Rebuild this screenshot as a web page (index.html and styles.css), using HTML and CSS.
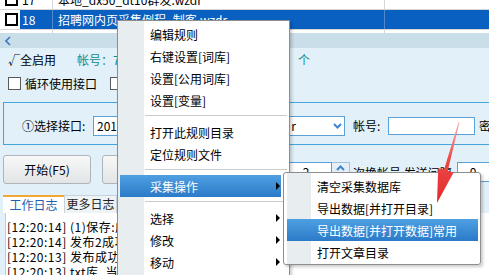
FILE: index.html
```html
<!DOCTYPE html>
<html lang="zh-CN">
  <head>
    <meta charset="UTF-8" />
    <title>采集发布</title>
    <link rel="stylesheet" href="styles.css">
  </head>
  <body>
    <div class="rules">
      <div class="rule">
        <div class="cell cell-check"><span class="box"></span></div>
        <div class="cell cell-num">17</div>
        <div class="cell cell-name">本地_dx50_dt10群发.wzdr</div>
        <div class="cell cell-rest"></div>
      </div>
      <div class="rule rule-selected">
        <div class="cell cell-check"><span class="box"></span></div>
        <div class="cell cell-num">18</div>
        <div class="cell cell-name">招聘网内页采集例程_制客.wzdr</div>
        <div class="cell cell-rest"></div>
      </div>
      <div class="rule">
        <div class="cell cell-check"><span class="box"></span></div>
        <div class="cell cell-num">19</div>
        <div class="cell cell-name">文章_批量采集发布.wzdr</div>
        <div class="cell cell-rest"></div>
      </div>
    </div>
    <div class="hscroll">
      <svg width="6" height="10" viewBox="0 0 6 10"><polyline points="5,1 1,5 5,9" fill="none" stroke="#3b78c4" stroke-width="1.6"/></svg>
    </div>

    <div class="panel">
      <div class="status">
        <span class="all-on">√全启用</span>
        <span class="account account-main">帐号：7 已登录 0 共 1</span>
        <span class="account">个</span>
      </div>
      <div class="options">
        <label class="check"><span class="box"></span>循环使用接口</label>
        <label class="check"><span class="box"></span>随机使用帐号</label>
      </div>
      <div class="group">
        <span class="group-label">①选择接口:</span>
        <div class="combo">
          <span class="combo-text">2016</span>
          <span>r</span>
          <span class="combo-btn">
            <svg width="9" height="6" viewBox="0 0 9 6"><polyline points="1,1 4.5,4.5 8,1" fill="none" stroke="#3b86d6" stroke-width="2"/></svg>
          </span>
        </div>
        <span class="field-label">帐号:</span>
        <div class="field"></div>
        <span class="field-tail">密</span>
      </div>
      <div class="actions">
        <button class="btn">开始(F5)</button>
        <button class="btn btn-wide">停止</button>
        <div class="interval">
          <div class="num">2</div>
          <span class="spin">
            <svg width="9" height="6" viewBox="0 0 9 6"><polyline points="1,5 4.5,1.5 8,5" fill="none" stroke="#3b86d6" stroke-width="2"/></svg>
          </span>
          <span class="interval-text">次换帐号 发送间隔</span>
          <div class="num num-wide">0</div>
        </div>
      </div>
      <div class="tabs">
        <div class="tab tab-active">工作日志</div>
        <div class="tab">更多日志</div>
      </div>
      <div class="log">
        <div>[12:20:14] (1)保存:成功</div>
        <div>[12:20:14] 发布2成功</div>
        <div>[12:20:13] 发布成功</div>
        <div>[12:20:13] txt库_当前</div>
      </div>
    </div>

    <div class="menu">
      <div class="menu-item">编辑规则</div>
      <div class="menu-item">右键设置[词库]</div>
      <div class="menu-item">设置[公用词库]</div>
      <div class="menu-item">设置[变量]</div>
      <div class="menu-sep"></div>
      <div class="menu-item">打开此规则目录</div>
      <div class="menu-item">定位规则文件</div>
      <div class="menu-sep"></div>
      <div class="menu-item active">采集操作<span class="sub-arrow"></span></div>
      <div class="menu-sep"></div>
      <div class="menu-item">选择<span class="sub-arrow"></span></div>
      <div class="menu-item">修改<span class="sub-arrow"></span></div>
      <div class="menu-item">移动<span class="sub-arrow"></span></div>
    </div>

    <div class="submenu">
      <div class="submenu-item">清空采集数据库</div>
      <div class="submenu-item">导出数据[并打开目录]</div>
      <div class="submenu-item active">导出数据[并打开数据]常用</div>
      <div class="submenu-item">打开文章目录</div>
    </div>

    <svg class="pointer" width="489" height="275" viewBox="0 0 489 275">
      <defs>
        <linearGradient id="red" x1="0" y1="0" x2="0" y2="1">
          <stop offset="0" stop-color="#f6b3b3"/>
          <stop offset="0.45" stop-color="#ec4a4a"/>
          <stop offset="1" stop-color="#e42828"/>
        </linearGradient>
      </defs>
      <polygon points="458.6,122 459.6,122 447.8,170.8 453.6,172.4 437,203 438.2,168.2 444,169.8" fill="url(#red)"/>
    </svg>
  </body>
</html>
```

FILE: styles.css
```css
* {
  margin: 0;
  padding: 0;
  box-sizing: border-box;
}

body {
  width: 489px;
  height: 275px;
  overflow: hidden;
  position: relative;
  background: #e2f1f9;
  font-family: "Noto Sans CJK SC", "Noto Sans", sans-serif;
  font-size: 12px;
  color: #000;
}

/* rule list */
.rules {
  height: 33px;
  overflow: hidden;
  background: #fff;
}

.rule {
  display: flex;
  height: 20px;
  border-bottom: 1px solid #d6d6d6;
}

.rule:first-child {
  margin-top: -10px;
}

.cell {
  display: flex;
  align-items: center;
  flex-shrink: 0;
  height: 100%;
  white-space: nowrap;
}

.cell-check {
  width: 20px;
  padding-left: 5px;
  background: #fff;
}

.cell-num {
  width: 33px;
  padding-left: 2px;
  border-right: 1px solid #d6d6d6;
}

.cell-name {
  width: 332px;
  padding-left: 5px;
  border-right: 1px solid #d6d6d6;
}

.cell-rest {
  flex: 1;
}

.rule-selected {
  background: #0a60c0;
  color: #fff;
}

.rule-selected .cell-num,
.rule-selected .cell-name {
  border-right-color: #4f88cc;
}

.rule .box {
  width: 13px;
  height: 13px;
  border: 2px solid #000;
  background: #fff;
}

.hscroll {
  height: 15px;
  background: #c9dee9;
  padding: 3px 0 0 5px;
}

.hscroll svg {
  display: block;
}

/* main panel */
.panel {
  padding-left: 3px;
}

.status {
  display: flex;
  align-items: center;
  height: 22px;
  padding-left: 5px;
  white-space: nowrap;
}

.status > *,
.group > *,
.actions > *,
.interval > * {
  flex-shrink: 0;
}

.all-on {
  width: 69px;
}

.account {
  color: #14898a;
}

.account-main {
  width: 221px;
  overflow: hidden;
}

.options {
  display: flex;
  align-items: center;
  height: 26px;
  padding-left: 5px;
}

.check {
  display: flex;
  align-items: center;
  gap: 4px;
  width: 102px;
  white-space: nowrap;
}

.check .box {
  width: 13px;
  height: 13px;
  border: 1px solid #5a5a5a;
  background: #fff;
}

.group {
  display: flex;
  align-items: center;
  height: 43px;
  margin-top: 6px;
  margin-right: -20px;
  padding: 4px 0 0 18px;
  border: 1px solid #45a5dc;
  white-space: nowrap;
}

.group-label {
  width: 71px;
}

.combo {
  display: flex;
  align-items: center;
  width: 252px;
  height: 20px;
  padding-left: 3px;
  border: 1px solid #5ba0d6;
  background: #fff;
}

.combo-text {
  flex: 1;
}

.combo-btn {
  display: flex;
  justify-content: flex-end;
  width: 48px;
  padding-right: 2px;
}

.field-label {
  width: 35px;
  margin-left: 8px;
}

.field {
  width: 87px;
  height: 18px;
  border: 1px solid #5ba0d6;
  background: #fff;
}

.field-tail {
  margin-left: 4px;
}

.actions {
  display: flex;
  align-items: flex-start;
  height: 29px;
  margin-top: 10px;
}

.btn {
  width: 88px;
  height: 29px;
  border: 1px solid #adb5ba;
  border-radius: 3px;
  background: linear-gradient(#f8f8f8, #e2e4e5);
  font-family: inherit;
  font-size: 12px;
  color: #000;
}

.btn-wide {
  width: 110px;
  margin-left: 11px;
}

.interval {
  display: flex;
  align-items: center;
  margin-left: 68px;
  margin-top: 7px;
  white-space: nowrap;
}

.num {
  width: 52px;
  height: 20px;
  line-height: 18px;
  text-align: center;
  border: 1px solid #5ba0d6;
  background: #fff;
}

.spin {
  display: flex;
  justify-content: center;
  width: 18px;
  height: 20px;
  padding-top: 2px;
  border: 1px solid #9fc3de;
  border-left: none;
  background: #e6eff5;
}

.interval-text {
  margin-left: 3px;
}

.num-wide {
  width: 70px;
  margin-left: 5px;
  padding-left: 12px;
  text-align: left;
}

.tabs {
  display: flex;
  height: 18px;
  margin-top: 11px;
}

.tab {
  width: 53px;
  line-height: 16px;
  text-align: center;
  border: 1px solid #c6d3db;
  border-bottom: none;
  background: #eef3f6;
  color: #222;
}

.tab-active {
  width: 61px;
  border: none;
  border-top: 2px solid #f2a735;
  background: #fff;
  color: #1f5fae;
}

.log {
  height: 62px;
  margin-left: 2px;
  padding: 6px 0 0 1px;
  line-height: 15px;
  letter-spacing: 0.5px;
  white-space: nowrap;
  overflow: hidden;
  border-left: 1px solid #b9cdd9;
  background: #fff;
}

/* context menus */
.menu {
  position: absolute;
  left: 117px;
  top: 20px;
  width: 173px;
  height: 258px;
  padding-top: 2px;
  border: 1px solid #8e8e8e;
  background: linear-gradient(to right, #e8edf0 26px, #fff 26px);
  box-shadow: 2px 2px 3px rgba(0, 0, 0, 0.2);
}

.menu-item {
  display: flex;
  align-items: center;
  height: 22px;
  margin: 0 8px 0 2px;
  padding-left: 30px;
  white-space: nowrap;
}

.menu-item.active,
.submenu-item.active {
  background: linear-gradient(#4fa0e2, #2b7ac8);
  color: #fff;
}

.menu-sep {
  height: 1px;
  margin: 4px 2px 5px 27px;
  background: #cbcbcb;
}

.sub-arrow {
  margin-left: auto;
  margin-right: 1px;
  border-left: 4px solid #000;
  border-top: 4px solid transparent;
  border-bottom: 4px solid transparent;
}

.submenu {
  position: absolute;
  left: 283px;
  top: 172px;
  width: 198px;
  height: 93px;
  padding-top: 2px;
  border: 1px solid #8e8e8e;
  border-radius: 3px;
  background: linear-gradient(to right, #fff 3px, #e8edf0 3px, #e8edf0 27px, #fff 27px);
  box-shadow: 2px 2px 3px rgba(0, 0, 0, 0.2);
}

.submenu-item {
  display: flex;
  align-items: center;
  height: 22px;
  margin: 0 2px 0 3px;
  padding-left: 30px;
  white-space: nowrap;
}

.pointer {
  position: absolute;
  left: 0;
  top: 0;
  pointer-events: none;
}
```
